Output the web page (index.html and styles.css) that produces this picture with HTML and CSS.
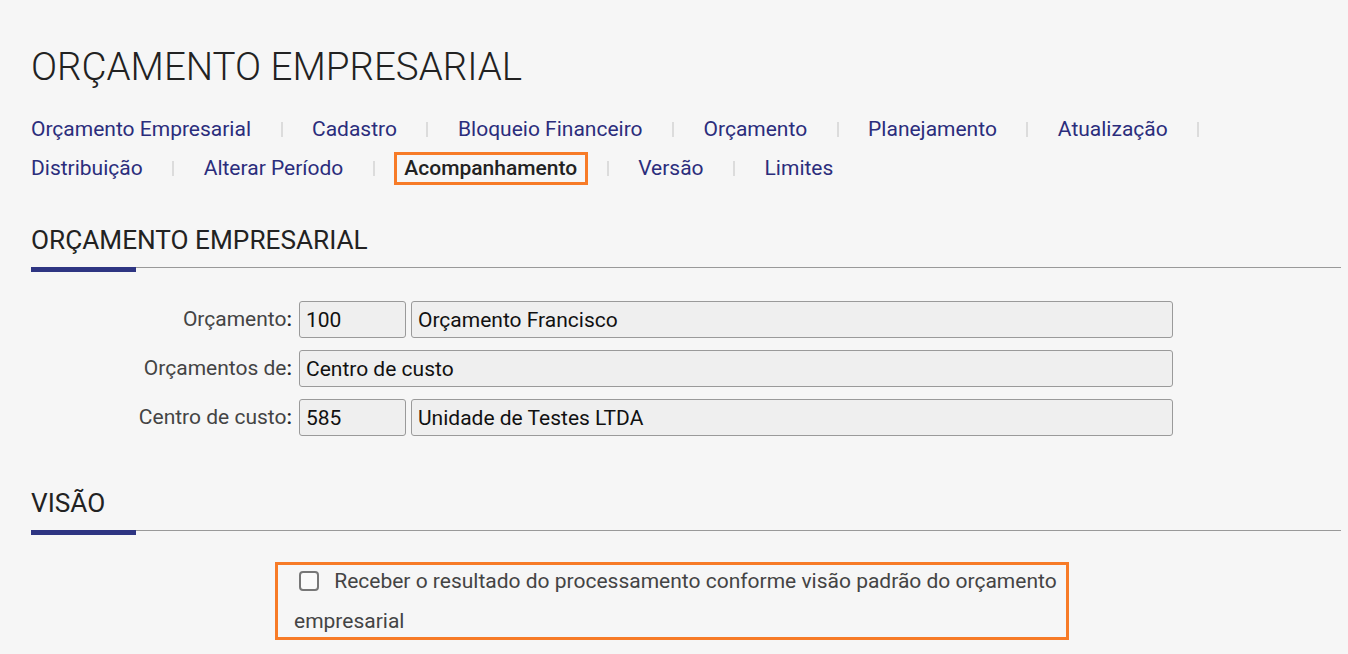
FILE: index.html
```html
<!DOCTYPE html>
<html>
  <head>
    <meta charset="utf-8" />
    <link rel="stylesheet" href="styles.css">
    <title>Orçamento Empresarial</title>
  </head>
  <body>
    <div class="page">
      <h1 class="title">ORÇAMENTO EMPRESARIAL</h1>

      <ul class="menu">
        <li><a href="#">Orçamento Empresarial</a></li>
        <li><a href="#">Cadastro</a></li>
        <li><a href="#">Bloqueio Financeiro</a></li>
        <li><a href="#">Orçamento</a></li>
        <li><a href="#">Planejamento</a></li>
        <li><a href="#">Atualização</a></li>
        <li><a href="#">Distribuição</a></li>
        <li><a href="#">Alterar Período</a></li>
        <li><a href="#" class="active">Acompanhamento</a></li>
        <li><a href="#">Versão</a></li>
        <li><a href="#">Limites</a></li>
      </ul>

      <h2 class="section">ORÇAMENTO EMPRESARIAL</h2>

      <div class="form">
        <label class="lbl">Orçamento<span class="colon">:</span></label>
        <div class="fields">
          <input class="field code" type="text" value="100" readonly>
          <input class="field wide" type="text" value="Orçamento Francisco" readonly>
        </div>

        <label class="lbl">Orçamentos de<span class="colon">:</span></label>
        <div class="fields">
          <input class="field full" type="text" value="Centro de custo" readonly>
        </div>

        <label class="lbl">Centro de custo<span class="colon">:</span></label>
        <div class="fields">
          <input class="field code" type="text" value="585" readonly>
          <input class="field wide" type="text" value="Unidade de Testes LTDA" readonly>
        </div>
      </div>

      <h2 class="section vis">VISÃO</h2>

      <div class="notice">
        <p class="notice-text"><input type="checkbox" class="chk"> Receber o resultado do processamento conforme visão padrão do orçamento empresarial</p>
      </div>
    </div>
  </body>
</html>
```

FILE: styles.css
```css
* {
  box-sizing: border-box;
}
html, body {
  margin: 0;
  background: #f6f6f6;
  font-family: Roboto, "Liberation Sans", sans-serif;
}
.page {
  padding: 44px 7px 0 31px;
}
.title {
  margin: 0;
  font-size: 38.5px;
  line-height: 46px;
  font-weight: 300;
  color: #222;
}
.menu {
  list-style: none;
  margin: 20px 0 0 0;
  padding: 0;
  display: flex;
  flex-wrap: wrap;
  max-width: 1290px;
  font-size: 21px;
  line-height: 39px;
}
.menu li {
  display: flex;
  align-items: center;
}
.menu li::after {
  content: "";
  width: 2px;
  height: 15px;
  background: #dcdcdc;
  margin: 0 29.5px;
}
.menu li:last-child::after {
  display: none;
}
.menu a {
  color: #2b2d7c;
  text-decoration: none;
}
.menu a.active {
  color: #222;
  font-weight: 500;
  border: 3px solid #f77b27;
  padding: 0 8px 0 7px;
  margin: 0 -11px 0 -10px;
  line-height: 27px;
}
.section {
  position: relative;
  margin: 37px 0 0 0;
  padding-bottom: 12px;
  border-bottom: 1px solid #999;
  font-size: 26.2px;
  line-height: 30px;
  font-weight: 400;
  color: #222;
}
.section::after {
  content: "";
  position: absolute;
  left: 0;
  bottom: -5px;
  width: 105px;
  height: 5px;
  background: #2e3582;
}
.section.vis {
  margin-top: 52px;
}
.form {
  display: grid;
  grid-template-columns: 261px 874px;
  column-gap: 7px;
  row-gap: 12px;
  margin-top: 33px;
}
.lbl {
  text-align: right;
  font-size: 21px;
  color: #444;
  line-height: 37px;
}
.colon {
  color: #222;
  font-weight: 500;
}
.fields {
  display: flex;
  gap: 5px;
}
.field {
  height: 37px;
  border: 1px solid #9a9a9a;
  border-radius: 3px;
  background: #efefef;
  font-family: Roboto, "Liberation Sans", sans-serif;
  font-size: 21px;
  color: #111;
  padding: 0 6px;
  outline: none;
}
.code {
  width: 107px;
}
.wide {
  width: 762px;
}
.full {
  width: 874px;
}
.notice {
  width: 794px;
  margin: 31px 0 0 244px;
  border: 3px solid #f77b27;
  padding: 0 0 0 16px;
}
.notice-text {
  margin: -4px 0 -4px 0;
  font-size: 21px;
  line-height: 40px;
  color: #444;
}
.chk {
  -webkit-appearance: none;
  appearance: none;
  width: 20px;
  height: 20px;
  margin: 0 10px 0 5px;
  border: 2px solid #777;
  border-radius: 4px;
  background: #fafafa;
  vertical-align: -3px;
}
```
